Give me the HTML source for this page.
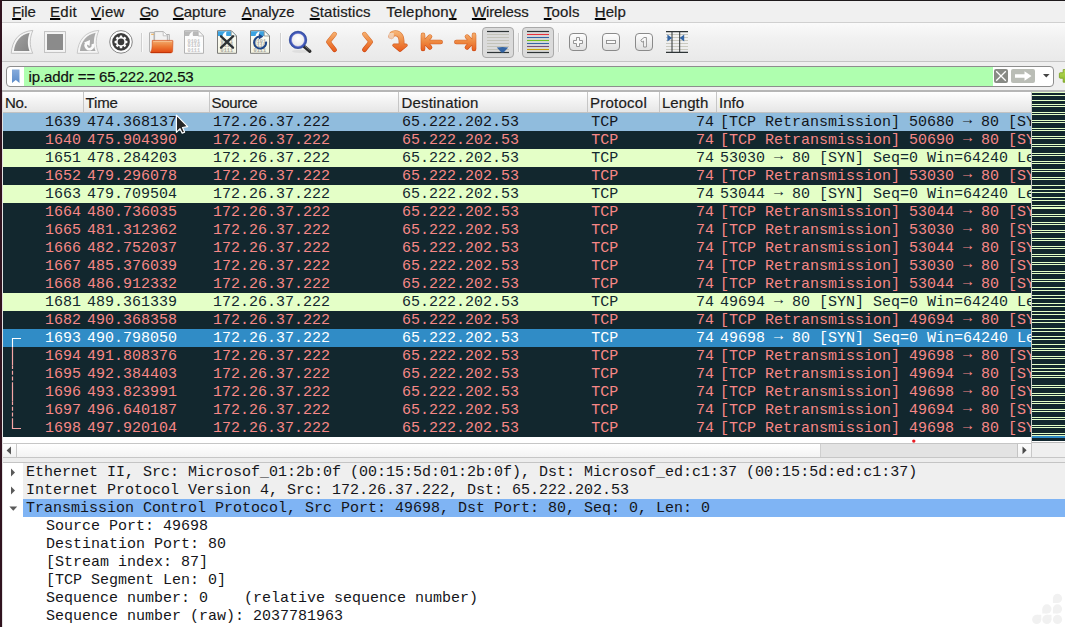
<!DOCTYPE html>
<html><head><meta charset="utf-8">
<style>
html,body{margin:0;padding:0;}
body{width:1065px;height:627px;overflow:hidden;background:#efefef;position:relative;font-family:"Liberation Sans",sans-serif;font-size:15px;color:#1a1a1a;}
div,span,i,svg{position:absolute;box-sizing:border-box;}
#topb{left:0;top:0;width:1065px;height:1px;background:#1e1a1c;}
#leftb{left:0;top:0;width:2px;height:627px;background:#31131f;}
#menubar{left:2px;top:1px;width:1063px;height:21px;background:#f0f0f0;}
#menubar span{-webkit-text-stroke:0.2px #1c1c1c;top:1px;height:20px;line-height:20px;white-space:nowrap;color:#1c1c1c;}
#menubar u{text-decoration:underline;text-underline-offset:1px;text-decoration-thickness:2px;text-decoration-color:#000;text-decoration-skip-ink:none;}
#mline{left:2px;top:22px;width:1063px;height:1px;background:#d0d0d0;}
#toolbar{left:2px;top:23px;width:1063px;height:38px;background:linear-gradient(#fafafa,#f1f1f1 40%,#e9e9e9);}
#tline{left:2px;top:61px;width:1063px;height:1px;background:#c4c4c4;}
.tsep{top:33px;width:1px;height:19px;background:#cfcfcf;border-right:1px solid #fafafa;width:2px;}
.pbtn{top:27px;height:31px;border:1px solid #a9a9a9;border-radius:4px;background:#dbdbdb;}
#filter{left:6px;top:66px;width:1048px;height:21px;border:1px solid #8d8d8d;border-radius:4px;background:#fff;overflow:hidden;}
#fgreen{left:17px;top:0;width:969px;height:19px;background:#afffaf;}
#ftext{-webkit-text-stroke:0.2px #111;left:21.6px;top:0;height:19px;line-height:20px;white-space:nowrap;color:#111;}
#hline{left:2px;top:90px;width:1063px;height:2px;background:#b6b6b6;}
#header{left:2px;top:92px;width:1029px;height:21px;border-bottom:1px solid #c2c2c2;background:linear-gradient(#ffffff,#f4f4f4 40%,#e6e6e6);}
#header span{-webkit-text-stroke:0.2px #1c1c1c;top:0;height:20px;line-height:21px;white-space:nowrap;color:#1c1c1c;}
#header i{top:0;width:1px;height:20px;background:#c6c6c6;}
#list{left:2px;top:0;width:1029px;height:627px;font-family:"Liberation Mono",monospace;font-size:15px;}
.r{left:0;width:1029px;height:18px;overflow:hidden;white-space:pre;}
.r .c{top:1px;height:18px;line-height:18px;}
.r b{font-weight:normal;position:relative;top:-2px;}
.bad{background:#12272e;color:#f78787;}
.grn{background:#e4ffc7;color:#12272e;}
.sel1{background:#90bcdd;color:#12141a;}
.sel2{background:#308cc6;color:#ffffff;}
.no{left:0;width:79px;text-align:right;}
.tm{left:85px;}
.src{left:211px;}
.dst{left:400px;}
.pr{left:589.3px;}
.ln{left:660px;width:52px;text-align:right;}
.inf{left:718px;}
#mmb{left:1031px;top:92px;width:1px;height:366px;background:#c8c8c8;}
#mmw{left:1032px;top:441px;width:33px;height:2px;background:#fff;border-bottom:1px solid #b9b9b9;}
#mml{left:1031px;top:457px;width:34px;height:1px;background:#c6c6c6;}
#mm{left:1032px;top:92px;width:33px;height:349px;background:#12272e;overflow:hidden;}
#mm i{left:0;width:33px;height:1px;background:#e4ffc7;}
#gap{left:2px;top:437px;width:1029px;height:6px;background:#fff;}
#hsb{left:2px;top:443px;width:1029px;height:15px;background:linear-gradient(#ffffff,#f1f1f1);border-top:1px solid #c6c6c6;border-bottom:1px solid #c6c6c6;}
#lb2{left:2px;top:92px;width:1px;height:535px;background:#e3e3e3;}
#split{left:2px;top:458px;width:1063px;height:4px;background:#ededed;}
#detail{left:2px;top:462px;width:1063px;height:165px;border-top:1px solid #c4c4c4;background:#fff;font-family:"Liberation Mono",monospace;font-size:15px;color:#15151a;}
#detail div{left:0;height:18px;line-height:20px;white-space:pre;width:1063px;}
#detail .top{left:21px;width:1042px;background:#efefef;padding-left:3px;}
#detail .sel{background:#7fb4f4;}
#detail .ch{padding-left:44px;}
</style></head><body>
<div id="topb"></div>
<div id="menubar">
<span style="left:10.1px;letter-spacing:-0.17px"><u>F</u>ile</span>
<span style="left:48.0px;letter-spacing:0.29px"><u>E</u>dit</span>
<span style="left:89.1px;letter-spacing:0.36px"><u>V</u>iew</span>
<span style="left:137.8px;letter-spacing:-0.95px"><u>G</u>o</span>
<span style="left:170.9px;letter-spacing:0.02px"><u>C</u>apture</span>
<span style="left:239.7px;letter-spacing:-0.08px"><u>A</u>nalyze</span>
<span style="left:307.7px;letter-spacing:0.10px"><u>S</u>tatistics</span>
<span style="left:384.3px;letter-spacing:0.21px">Telephon<u>y</u></span>
<span style="left:469.9px;letter-spacing:-0.09px"><u>W</u>ireless</span>
<span style="left:541.8px;letter-spacing:0.20px"><u>T</u>ools</span>
<span style="left:592.8px;letter-spacing:0.04px"><u>H</u>elp</span>
</div>
<div id="mline"></div>
<div id="toolbar"></div>
<div id="tline"></div>
<div class="tsep" style="left:141px"></div>
<div class="tsep" style="left:280px"></div>
<div class="tsep" style="left:518px"></div>
<div class="tsep" style="left:558px"></div>
<div class="pbtn" style="left:482px;width:32px"></div>
<div class="pbtn" style="left:522px;width:32px"></div>
<svg style="left:0;top:24px" width="1065" height="38" viewBox="0 24 1065 38">
<defs>
<linearGradient id="gfin" x1="0" y1="0" x2="1" y2="1"><stop offset="0" stop-color="#a2a2a2"/><stop offset="1" stop-color="#858585"/></linearGradient>
<linearGradient id="gor" gradientUnits="userSpaceOnUse" x1="0" y1="31" x2="0" y2="52"><stop offset="0" stop-color="#f7b678"/><stop offset="0.5" stop-color="#ee8a42"/><stop offset="1" stop-color="#e8591a"/></linearGradient>
<linearGradient id="gorb" gradientUnits="userSpaceOnUse" x1="0" y1="31" x2="0" y2="52"><stop offset="0" stop-color="#de8442"/><stop offset="1" stop-color="#c8420e"/></linearGradient>
<linearGradient id="gfold" gradientUnits="userSpaceOnUse" x1="0" y1="40" x2="0" y2="53"><stop offset="0" stop-color="#f3b073"/><stop offset="0.5" stop-color="#ec7a36"/><stop offset="1" stop-color="#e2440f"/></linearGradient>
<linearGradient id="gpap" gradientUnits="userSpaceOnUse" x1="0" y1="30" x2="0" y2="54"><stop offset="0" stop-color="#fefef8"/><stop offset="1" stop-color="#f3f3e2"/></linearGradient>
<linearGradient id="gbtn" gradientUnits="userSpaceOnUse" x1="0" y1="33" x2="0" y2="51"><stop offset="0" stop-color="#ffffff"/><stop offset="1" stop-color="#dedede"/></linearGradient>
<radialGradient id="glens" cx="0.5" cy="0.4" r="0.6"><stop offset="0" stop-color="#ffffff"/><stop offset="1" stop-color="#e4e4e4"/></radialGradient>
</defs>
<!-- shark fin -->
<path id="finO" d="M11.2 53.3 C12.3 40 19 31.5 32.9 30.4 C29.6 37.5 29.2 46 32.7 53.3 Z" fill="#f6f6f6" stroke="#bcbcbc" stroke-width="0.9" stroke-linejoin="round"/>
<path d="M13.9 51 C15 41.5 20.5 34.5 29.7 32.8 C27.4 38.5 27.2 45.5 29.5 51 Z" fill="url(#gfin)"/>
<!-- stop -->
<rect x="44.5" y="31.6" width="21" height="20.8" fill="#f4f4f4" stroke="#bdbdbd" stroke-width="0.9"/>
<rect x="47" y="34" width="16" height="16" fill="#8b8b8b"/>
<!-- restart fin -->
<g transform="translate(66,0)">
<path d="M11.2 53.3 C12.3 40 19 31.5 32.9 30.4 C29.6 37.5 29.2 46 32.7 53.3 Z" fill="#f6f6f6" stroke="#c4c4c4" stroke-width="0.9" stroke-linejoin="round"/>
<path d="M13.9 51 C15 41.5 20.5 34.5 29.7 32.8 C27.4 38.5 27.2 45.5 29.5 51 Z" fill="#ababab"/>
<path d="M26.6 44 A3.6 3.6 0 1 1 20.6 43.2" fill="none" stroke="#fbfbfb" stroke-width="2.6"/>
<path d="M18 42.6 L24 40 L23.6 46 Z" fill="#fbfbfb"/>
</g>
<!-- gear -->
<circle cx="121" cy="41.9" r="11.3" fill="#fdfdfd" stroke="#6a6a6a" stroke-width="0.8"/>
<circle cx="121" cy="41.9" r="8.8" fill="#3b3b3b"/>
<g fill="#fbfbfb" transform="translate(121,41.9)">
<circle r="4.9"/>
<g id="teeth"><rect x="-1.25" y="-6.4" width="2.5" height="12.8" rx="0.4"/><rect x="-1.25" y="-6.4" width="2.5" height="12.8" rx="0.4" transform="rotate(45)"/><rect x="-1.25" y="-6.4" width="2.5" height="12.8" rx="0.4" transform="rotate(90)"/><rect x="-1.25" y="-6.4" width="2.5" height="12.8" rx="0.4" transform="rotate(135)"/></g>
</g>
<circle cx="121" cy="41.9" r="3.3" fill="#3b3b3b"/>
<!-- folder -->
<path d="M149.5 33 Q149.5 32.4 150.2 32.4 H154 V52.5 H151 Q149.5 52.5 149.5 51 Z" fill="#f0f0f0" stroke="#a9a9a9" stroke-width="0.9"/>
<rect x="151.2" y="33.8" width="2.6" height="0.9" fill="#f0a030"/>
<path d="M166 34.5 H169.3 V41 H166 Z" fill="#eeeeee" stroke="#a9a9a9" stroke-width="0.9"/>
<path d="M154.6 31.6 H163.4 L167.4 35.6 V42 H154.6 Z" fill="#f2f2f2" stroke="#ababab" stroke-width="0.9"/>
<path d="M163.2 31.8 V35.8 H167.2" fill="#fdfdfd" stroke="#b5b5b5" stroke-width="0.8"/>
<path d="M152.3 40.4 H172.4 Q173 40.4 172.9 41 L172.6 51.4 Q172.4 52.8 171 52.8 H151 Q150.3 52.8 150.8 52 Q152.2 49.5 152.2 46 Z" fill="url(#gfold)" stroke="#d4531c" stroke-width="0.7"/>
<path d="M150.9 52.5 H171.2" stroke="#c03408" stroke-width="1" fill="none"/>
<path d="M153.2 41.4 H172" stroke="#f8d0a8" stroke-width="0.8" fill="none" opacity="0.8"/>
<!-- save (disabled) file -->
<path d="M184.5 30.7 H198.4 L203.5 35.8 V53.3 H184.5 Z" fill="#fcfcfc" stroke="#b3b3b3" stroke-width="1"/>
<path d="M185 31.2 H198.2 L203 36 H185 Z" fill="#b9b9b9"/>
<path d="M189 36.2 C189.5 33.5 191 31.8 193.3 31.2 C192.5 33 192.6 35 193.2 36.2 Z" fill="#fcfcfc"/>
<path d="M198.2 31.2 V36 H203" fill="#fafafa" stroke="#b3b3b3" stroke-width="0.8"/>
<g font-family="Liberation Mono" font-size="5.2" fill="#c4c4c4" font-weight="bold"><text x="187.6" y="42.6">0101</text><text x="187.6" y="47.1">0110</text><text x="187.6" y="51.6">0111</text></g>
<!-- close file -->
<g id="cfile">
<path d="M217.5 30.7 H231.4 L236.5 35.8 V53.3 H217.5 Z" fill="url(#gpap)" stroke="#7b7b78" stroke-width="1"/>
<path d="M218 31.2 H231.2 L236 36 H218 Z" fill="#3ba3e2"/>
<path d="M222.4 36.2 C222.9 33.5 224.4 31.8 226.7 31.2 C225.9 33 226 35 226.6 36.2 Z" fill="#ffffff"/>
<path d="M231.2 31.2 V36 H236" fill="#fcfcf4" stroke="#8a8a86" stroke-width="0.8"/>
<g font-family="Liberation Mono" font-size="5.2" fill="#a9a99f" font-weight="bold"><text x="220.6" y="42.6">0101</text><text x="220.6" y="47.1">0110</text><text x="220.6" y="51.6">0111</text></g>
</g>
<path d="M221 36.3 L233 47.7 M233 36.3 L221 47.7" stroke="#2b3033" stroke-width="2.3" stroke-linecap="round" fill="none"/>
<!-- reload file -->
<g transform="translate(33,0)">
<path d="M217.5 30.7 H231.4 L236.5 35.8 V53.3 H217.5 Z" fill="url(#gpap)" stroke="#7b7b78" stroke-width="1"/>
<path d="M218 31.2 H231.2 L236 36 H218 Z" fill="#3ba3e2"/>
<path d="M222.4 36.2 C222.9 33.5 224.4 31.8 226.7 31.2 C225.9 33 226 35 226.6 36.2 Z" fill="#ffffff"/>
<path d="M231.2 31.2 V36 H236" fill="#fcfcf4" stroke="#8a8a86" stroke-width="0.8"/>
<g font-family="Liberation Mono" font-size="5.2" fill="#a9a99f" font-weight="bold"><text x="220.6" y="42.6">0101</text><text x="220.6" y="47.1">0110</text><text x="220.6" y="51.6">0111</text></g>
<path d="M233 41.6 A6 6 0 1 1 226.6 36.6" fill="none" stroke="#1f4788" stroke-width="2"/>
<path d="M225.8 33.8 L230.4 36.6 L225.8 39.4 Z" fill="#1f4788"/>
</g>
<!-- magnifier -->
<ellipse cx="300" cy="51.3" rx="8" ry="1.6" fill="#d9d9d9" opacity="0.7"/>
<path d="M303.6 46 L309.8 51.2" stroke="#2a2a2a" stroke-width="3.4" stroke-linecap="round"/>
<path d="M305.2 46.4 L309.6 50" stroke="#8a8a8a" stroke-width="0.8" stroke-linecap="round"/>
<circle cx="298" cy="39.9" r="7.7" fill="url(#glens)" stroke="#3f58b4" stroke-width="2.4"/>
<circle cx="298" cy="39.9" r="8.7" fill="none" stroke="#27408e" stroke-width="0.6"/>
<circle cx="298" cy="39.9" r="6.6" fill="none" stroke="#7a80d8" stroke-width="0.6"/>
<!-- left chevron -->
<path d="M334.6 34.1 L328.4 41.9 L334.6 49.8" fill="none" stroke="url(#gorb)" stroke-width="4.6" stroke-linecap="round" stroke-linejoin="round"/>
<path d="M334.6 34.1 L328.4 41.9 L334.6 49.8" fill="none" stroke="url(#gor)" stroke-width="3.4" stroke-linecap="round" stroke-linejoin="round"/>
<!-- right chevron -->
<path d="M364.4 34.1 L370.7 41.9 L364.4 49.8" fill="none" stroke="url(#gorb)" stroke-width="4.6" stroke-linecap="round" stroke-linejoin="round"/>
<path d="M364.4 34.1 L370.7 41.9 L364.4 49.8" fill="none" stroke="url(#gor)" stroke-width="3.4" stroke-linecap="round" stroke-linejoin="round"/>
<!-- jump -->
<g>
<path d="M391.3 36.2 C392 32.6 398 31.8 400.6 36.5 C401.8 39 401.6 42 401.6 45" fill="none" stroke="url(#gorb)" stroke-width="5.8" stroke-linecap="round"/>
<path d="M394 45.3 H406 L400 50.2 Z" fill="url(#gorb)" stroke="url(#gorb)" stroke-width="3.4" stroke-linejoin="round"/>
<path d="M391.3 36.2 C392 32.6 398 31.8 400.6 36.5 C401.8 39 401.6 42 401.6 45" fill="none" stroke="url(#gor)" stroke-width="4.6" stroke-linecap="round"/>
<path d="M394 45.3 H406 L400 50.2 Z" fill="url(#gor)" stroke="url(#gor)" stroke-width="2.2" stroke-linejoin="round"/>
<path d="M388.8 33 h5 v6.5 h-5z" fill="#f1f1f1" opacity="0.55"/>
</g>
<!-- first -->
<g fill="none" stroke-linecap="round" stroke-linejoin="round">
<path d="M423 34.9 V48.9 M425.5 42 H440.6 M430 36.6 L424.9 42 L430 47.4" stroke="url(#gorb)" stroke-width="4.6"/>
<path d="M423 34.9 V48.9 M425.5 42 H440.6 M430 36.6 L424.9 42 L430 47.4" stroke="url(#gor)" stroke-width="3.4"/>
</g>
<!-- last -->
<g fill="none" stroke-linecap="round" stroke-linejoin="round">
<path d="M474 34.9 V48.9 M471.5 42 H456.4 M467 36.6 L472.1 42 L467 47.4" stroke="url(#gorb)" stroke-width="4.6"/>
<path d="M474 34.9 V48.9 M471.5 42 H456.4 M467 36.6 L472.1 42 L467 47.4" stroke="url(#gor)" stroke-width="3.4"/>
</g>
<!-- autoscroll -->
<g fill="none" stroke-width="1">
<path d="M487 31.5H509" stroke="#2e3436" stroke-width="1.2"/>
<path d="M487 34.5H509M487 37.5H509M487 40.5H509M487 43.5H509M487 46.5H509M487 49.5H509" stroke="#c3c3b9" stroke-width="1"/>
<path d="M487 52.5H509" stroke="#2e3436" stroke-width="1.2"/>
</g>
<path d="M496.8 47.4 Q502.5 46.4 508.2 47.4 L503.6 52.4 H501.4 Z" fill="#3465a4"/>
<!-- colorize -->
<g fill="none" stroke-width="1.1">
<path d="M527 31.5H549" stroke="#2e3436" stroke-width="1.2"/>
<path d="M527 34.5H549" stroke="#e8303a"/>
<path d="M527 37.5H549" stroke="#3465a4"/>
<path d="M527 40.5H549" stroke="#73c020"/>
<path d="M527 43.5H549" stroke="#3465a4"/>
<path d="M527 46.5H549" stroke="#75507b"/>
<path d="M527 49.5H549" stroke="#c8a000"/>
<path d="M527 52.5H549" stroke="#2e3436" stroke-width="1.2"/>
</g>
<!-- zoom buttons -->
<g>
<rect x="569.5" y="33.5" width="17" height="17" rx="3.5" fill="url(#gbtn)" stroke="#8a8a8a" stroke-width="1"/>
<path d="M576.5 37.5h3v3h3v3h-3v3h-3v-3h-3v-3h3z" fill="#fafafa" stroke="#8a8a8a" stroke-width="0.9"/>
<rect x="602.5" y="33.5" width="17" height="17" rx="3.5" fill="url(#gbtn)" stroke="#8a8a8a" stroke-width="1"/>
<rect x="606.5" y="40.5" width="9" height="3" fill="#fafafa" stroke="#8a8a8a" stroke-width="0.9"/>
<rect x="635.5" y="33.5" width="17" height="17" rx="3.5" fill="url(#gbtn)" stroke="#8a8a8a" stroke-width="1"/>
<path d="M640.8 40.2 L644 37.5 H646.4 V47 H643.6 V41 L642 42.2 Z" fill="#fafafa" stroke="#8a8a8a" stroke-width="0.9"/>
</g>
<!-- resize columns -->
<g fill="none">
<path d="M666 34.5H688M666 37.5H688M666 40.5H688M666 43.5H688M666 46.5H688M666 49.5H688" stroke="#c9c9bf" stroke-width="1"/>
<path d="M666 31.6H688M666 52.4H688" stroke="#2e3436" stroke-width="1.2"/>
<path d="M672 31V53M679.7 31V53" stroke="#2e3436" stroke-width="1"/>
</g>
<path d="M667.4 34.6 L672 38 L667.4 41.4 Z" fill="#3465a4"/>
<path d="M684.2 34.6 L679.6 38 L684.2 41.4 Z" fill="#3465a4"/>
</svg>

<div id="filter"><div id="fgreen"></div><span id="ftext" style="letter-spacing:-0.11px">ip.addr == 65.222.202.53</span>
<svg style="left:4px;top:2px" width="10" height="15" viewBox="0 0 10 15"><defs><linearGradient id="bk" x1="0" y1="0" x2="0" y2="1"><stop offset="0" stop-color="#86abdc"/><stop offset="1" stop-color="#5b8bc9"/></linearGradient></defs><path d="M1 0.5H8.5V14L4.8 11L1 14Z" fill="url(#bk)"/></svg>
<div style="left:987px;top:2px;width:14px;height:14px;background:#888a85;border-radius:2px"></div>
<svg style="left:987px;top:2px" width="14" height="14" viewBox="0 0 14 14"><path d="M2.2 2.2L11.8 11.8M11.8 2.2L2.2 11.8" stroke="#fff" stroke-width="1.3" fill="none"/></svg>
<div style="left:1004px;top:2px;width:24px;height:14px;background:#babdb6;border-radius:2px"></div>
<svg style="left:1004px;top:2px" width="24" height="14" viewBox="0 0 24 14"><path d="M4 5.2H13.5V2.2L20.5 7L13.5 11.8V8.8H4Z" fill="#fff"/></svg>
<svg style="left:1035.8px;top:7.2px" width="7" height="4" viewBox="0 0 7 4"><path d="M0 0H6.6L3.3 3.6Z" fill="#444"/></svg>
</div>
<svg style="left:1057px;top:67px" width="8" height="18" viewBox="1057 67 8 18"><defs><linearGradient id="gpl" x1="0" y1="0" x2="0" y2="1"><stop offset="0" stop-color="#b8dc58"/><stop offset="1" stop-color="#8ab82a"/></linearGradient></defs><path d="M1063.2 69.6 H1066 V82.2 H1063.2 V78.2 H1060.2 Q1059.4 78.2 1059.4 77.4 V73.6 Q1059.4 72.8 1060.2 72.8 H1063.2 Z" fill="url(#gpl)" stroke="#7fa428" stroke-width="0.9"/></svg>
<div id="hline"></div>
<div id="header">
<span style="left:3.0px;letter-spacing:-0.35px">No.</span>
<i style="left:81px"></i>
<span style="left:83.6px;letter-spacing:-0.14px">Time</span>
<i style="left:207px"></i>
<span style="left:209.4px;letter-spacing:-0.27px">Source</span>
<i style="left:396px"></i>
<span style="left:399.5px;letter-spacing:0.19px">Destination</span>
<i style="left:585px"></i>
<span style="left:587.9px;letter-spacing:0.26px">Protocol</span>
<i style="left:657px"></i>
<span style="left:659.9px;letter-spacing:0.09px">Length</span>
<i style="left:714px"></i>
<span style="left:717.0px;letter-spacing:-0.00px">Info</span>
</div>
<div id="list">
<div class="r sel1" style="top:113px"><span class="c no">1639</span><span class="c tm">474.368137</span><span class="c src">172.26.37.222</span><span class="c dst">65.222.202.53</span><span class="c pr">TCP</span><span class="c ln">74</span><span class="c inf">[TCP Retransmission] 50680 <b>→</b> 80 [SYN] Seq=0 Win=64240 Len=0</span></div>
<div class="r bad" style="top:131px"><span class="c no">1640</span><span class="c tm">475.904390</span><span class="c src">172.26.37.222</span><span class="c dst">65.222.202.53</span><span class="c pr">TCP</span><span class="c ln">74</span><span class="c inf">[TCP Retransmission] 50690 <b>→</b> 80 [SYN] Seq=0 Win=64240 Len=0</span></div>
<div class="r grn" style="top:149px"><span class="c no">1651</span><span class="c tm">478.284203</span><span class="c src">172.26.37.222</span><span class="c dst">65.222.202.53</span><span class="c pr">TCP</span><span class="c ln">74</span><span class="c inf">53030 <b>→</b> 80 [SYN] Seq=0 Win=64240 Len=0 MSS=1460</span></div>
<div class="r bad" style="top:167px"><span class="c no">1652</span><span class="c tm">479.296078</span><span class="c src">172.26.37.222</span><span class="c dst">65.222.202.53</span><span class="c pr">TCP</span><span class="c ln">74</span><span class="c inf">[TCP Retransmission] 53030 <b>→</b> 80 [SYN] Seq=0 Win=64240 Len=0</span></div>
<div class="r grn" style="top:185px"><span class="c no">1663</span><span class="c tm">479.709504</span><span class="c src">172.26.37.222</span><span class="c dst">65.222.202.53</span><span class="c pr">TCP</span><span class="c ln">74</span><span class="c inf">53044 <b>→</b> 80 [SYN] Seq=0 Win=64240 Len=0 MSS=1460</span></div>
<div class="r bad" style="top:203px"><span class="c no">1664</span><span class="c tm">480.736035</span><span class="c src">172.26.37.222</span><span class="c dst">65.222.202.53</span><span class="c pr">TCP</span><span class="c ln">74</span><span class="c inf">[TCP Retransmission] 53044 <b>→</b> 80 [SYN] Seq=0 Win=64240 Len=0</span></div>
<div class="r bad" style="top:221px"><span class="c no">1665</span><span class="c tm">481.312362</span><span class="c src">172.26.37.222</span><span class="c dst">65.222.202.53</span><span class="c pr">TCP</span><span class="c ln">74</span><span class="c inf">[TCP Retransmission] 53030 <b>→</b> 80 [SYN] Seq=0 Win=64240 Len=0</span></div>
<div class="r bad" style="top:239px"><span class="c no">1666</span><span class="c tm">482.752037</span><span class="c src">172.26.37.222</span><span class="c dst">65.222.202.53</span><span class="c pr">TCP</span><span class="c ln">74</span><span class="c inf">[TCP Retransmission] 53044 <b>→</b> 80 [SYN] Seq=0 Win=64240 Len=0</span></div>
<div class="r bad" style="top:257px"><span class="c no">1667</span><span class="c tm">485.376039</span><span class="c src">172.26.37.222</span><span class="c dst">65.222.202.53</span><span class="c pr">TCP</span><span class="c ln">74</span><span class="c inf">[TCP Retransmission] 53030 <b>→</b> 80 [SYN] Seq=0 Win=64240 Len=0</span></div>
<div class="r bad" style="top:275px"><span class="c no">1668</span><span class="c tm">486.912332</span><span class="c src">172.26.37.222</span><span class="c dst">65.222.202.53</span><span class="c pr">TCP</span><span class="c ln">74</span><span class="c inf">[TCP Retransmission] 53044 <b>→</b> 80 [SYN] Seq=0 Win=64240 Len=0</span></div>
<div class="r grn" style="top:293px"><span class="c no">1681</span><span class="c tm">489.361339</span><span class="c src">172.26.37.222</span><span class="c dst">65.222.202.53</span><span class="c pr">TCP</span><span class="c ln">74</span><span class="c inf">49694 <b>→</b> 80 [SYN] Seq=0 Win=64240 Len=0 MSS=1460</span></div>
<div class="r bad" style="top:311px"><span class="c no">1682</span><span class="c tm">490.368358</span><span class="c src">172.26.37.222</span><span class="c dst">65.222.202.53</span><span class="c pr">TCP</span><span class="c ln">74</span><span class="c inf">[TCP Retransmission] 49694 <b>→</b> 80 [SYN] Seq=0 Win=64240 Len=0</span></div>
<div class="r sel2" style="top:329px"><span class="c no">1693</span><span class="c tm">490.798050</span><span class="c src">172.26.37.222</span><span class="c dst">65.222.202.53</span><span class="c pr">TCP</span><span class="c ln">74</span><span class="c inf">49698 <b>→</b> 80 [SYN] Seq=0 Win=64240 Len=0 MSS=1460</span></div>
<div class="r bad" style="top:347px"><span class="c no">1694</span><span class="c tm">491.808376</span><span class="c src">172.26.37.222</span><span class="c dst">65.222.202.53</span><span class="c pr">TCP</span><span class="c ln">74</span><span class="c inf">[TCP Retransmission] 49698 <b>→</b> 80 [SYN] Seq=0 Win=64240 Len=0</span></div>
<div class="r bad" style="top:365px"><span class="c no">1695</span><span class="c tm">492.384403</span><span class="c src">172.26.37.222</span><span class="c dst">65.222.202.53</span><span class="c pr">TCP</span><span class="c ln">74</span><span class="c inf">[TCP Retransmission] 49694 <b>→</b> 80 [SYN] Seq=0 Win=64240 Len=0</span></div>
<div class="r bad" style="top:383px"><span class="c no">1696</span><span class="c tm">493.823991</span><span class="c src">172.26.37.222</span><span class="c dst">65.222.202.53</span><span class="c pr">TCP</span><span class="c ln">74</span><span class="c inf">[TCP Retransmission] 49698 <b>→</b> 80 [SYN] Seq=0 Win=64240 Len=0</span></div>
<div class="r bad" style="top:401px"><span class="c no">1697</span><span class="c tm">496.640187</span><span class="c src">172.26.37.222</span><span class="c dst">65.222.202.53</span><span class="c pr">TCP</span><span class="c ln">74</span><span class="c inf">[TCP Retransmission] 49694 <b>→</b> 80 [SYN] Seq=0 Win=64240 Len=0</span></div>
<div class="r bad" style="top:419px"><span class="c no">1698</span><span class="c tm">497.920104</span><span class="c src">172.26.37.222</span><span class="c dst">65.222.202.53</span><span class="c pr">TCP</span><span class="c ln">74</span><span class="c inf">[TCP Retransmission] 49698 <b>→</b> 80 [SYN] Seq=0 Win=64240 Len=0</span></div>
</div>
<div id="gap"></div>
<div id="hsb"><div style="left:14px;top:0;width:1px;height:13px;background:#c9c9c9"></div><div style="left:15px;top:0;width:803px;height:13px;background:linear-gradient(#ffffff,#f3f3f3)"></div><div style="left:818px;top:0;width:197px;height:13px;background:#e3e3e3;border-left:1px solid #cfcfcf"></div><div style="left:1015px;top:0;width:1px;height:13px;background:#c4c4c4"></div><div style="left:1016px;top:0;width:13px;height:13px;background:linear-gradient(#fdfdfd,#f1f1f1)"></div>
<svg style="left:4px;top:2px" width="6" height="9" viewBox="0 0 6 9"><path d="M5 0.6V8.4L0.6 4.5Z" fill="#555"/></svg>
<svg style="left:1019.6px;top:2px" width="6" height="9" viewBox="0 0 6 9"><path d="M0.5 0.4V8.2L4.6 4.3Z" fill="#4a4a4a"/></svg></div>
<div id="mmb"></div><div id="mmw"></div><div id="mml"></div>
<div id="mm"><i style="top:0px"></i><i style="top:3px"></i><i style="top:8px"></i><i style="top:12px"></i><i style="top:14px"></i><i style="top:20px"></i><i style="top:22px"></i><i style="top:28px"></i><i style="top:30px"></i><i style="top:36px"></i><i style="top:38px"></i><i style="top:44px"></i><i style="top:46px"></i><i style="top:52px"></i><i style="top:54px"></i><i style="top:61px"></i><i style="top:63px"></i><i style="top:69px"></i><i style="top:71px"></i><i style="top:77px"></i><i style="top:79px"></i><i style="top:85px"></i><i style="top:87px"></i><i style="top:93px"></i><i style="top:97px"></i><i style="top:100px"></i><i style="top:105px"></i><i style="top:108px"></i><i style="top:113px"></i><i style="top:115px"></i><i style="top:116px"></i><i style="top:122px"></i><i style="top:124px"></i><i style="top:130px"></i><i style="top:132px"></i><i style="top:138px"></i><i style="top:140px"></i><i style="top:146px"></i><i style="top:148px"></i><i style="top:154px"></i><i style="top:156px"></i><i style="top:162px"></i><i style="top:164px"></i><i style="top:170px"></i><i style="top:172px"></i><i style="top:179px"></i><i style="top:181px"></i><i style="top:187px"></i><i style="top:189px"></i><i style="top:195px"></i><i style="top:198px"></i><i style="top:203px"></i><i style="top:206px"></i><i style="top:211px"></i><i style="top:214px"></i><i style="top:219px"></i><i style="top:222px"></i><i style="top:227px"></i><i style="top:230px"></i><i style="top:236px"></i><i style="top:239px"></i><i style="top:244px"></i><i style="top:247px"></i><i style="top:252px"></i><i style="top:256px"></i><i style="top:258px"></i><i style="top:264px"></i><i style="top:266px"></i><i style="top:272px"></i><i style="top:276px"></i><i style="top:279px"></i><i style="top:283px"></i><i style="top:285px"></i><i style="top:293px"></i><i style="top:295px"></i><i style="top:301px"></i><i style="top:303px"></i><i style="top:309px"></i><i style="top:311px"></i><i style="top:317px"></i><i style="top:319px"></i><i style="top:325px"></i><i style="top:327px"></i><i style="top:333px"></i><i style="top:335px"></i><i style="top:341px"></i><i style="top:343px"></i><i style="top:344px;height:2px;background:#308cc6"></i></div>
<div id="split"></div>
<div id="detail">
<svg style="left:8px;top:4.5px" width="6" height="9" viewBox="0 0 6 9"><path d="M1 0.6V8.4L5 4.5Z" fill="#5a5a5a"/></svg>
<svg style="left:8px;top:22.5px" width="6" height="9" viewBox="0 0 6 9"><path d="M1 0.6V8.4L5 4.5Z" fill="#5a5a5a"/></svg>
<svg style="left:7px;top:42.5px" width="9" height="6" viewBox="0 0 9 6"><path d="M0.4 0.6H8.2L4.3 4.8Z" fill="#5a5a5a"/></svg>
<div class="top" style="top:0">Ethernet II, Src: Microsof_01:2b:0f (00:15:5d:01:2b:0f), Dst: Microsof_ed:c1:37 (00:15:5d:ed:c1:37)</div>
<div class="top" style="top:18px">Internet Protocol Version 4, Src: 172.26.37.222, Dst: 65.222.202.53</div>
<div class="top sel" style="top:36px">Transmission Control Protocol, Src Port: 49698, Dst Port: 80, Seq: 0, Len: 0</div>
<div class="ch" style="top:54px">Source Port: 49698</div>
<div class="ch" style="top:72px">Destination Port: 80</div>
<div class="ch" style="top:90px">[Stream index: 87]</div>
<div class="ch" style="top:108px">[TCP Segment Len: 0]</div>
<div class="ch" style="top:126px">Sequence number: 0    (relative sequence number)</div>
<div class="ch" style="top:144px">Sequence number (raw): 2037781963</div>
</div>

<div id="lb2"></div>
<svg style="left:0;top:329px" width="40" height="110" viewBox="0 329 40 110">
<path d="M12.5 347V338.5H21" fill="none" stroke="#ffffff" stroke-width="1.1"/>
<path d="M12.5 347V365.4" fill="none" stroke="#f5a6a6" stroke-width="1.2"/>
<path d="M12.5 365.4V383" fill="none" stroke="#f5a6a6" stroke-width="1.2" stroke-dasharray="4 1.8" stroke-dashoffset="0.5"/>
<path d="M12.5 383V401.4" fill="none" stroke="#f5a6a6" stroke-width="1.2"/>
<path d="M12.5 401.4V419" fill="none" stroke="#f5a6a6" stroke-width="1.2" stroke-dasharray="4 1.8" stroke-dashoffset="0.5"/>
<path d="M12.5 419V428.5H21" fill="none" stroke="#f5a6a6" stroke-width="1.2"/>
</svg>
<svg style="left:170px;top:110px" width="24" height="28" viewBox="170 110 24 28">
<path d="M176.4 115.2 V132.3 L180 128.7 L182.2 133.2 L184.6 132.1 L182.5 127.5 L187.7 126.6 Z" fill="#272727" stroke="#ffffff" stroke-width="1.2" stroke-linejoin="round"/>
</svg>
<svg style="left:910px;top:438px" width="8" height="6" viewBox="0 0 8 6"><circle cx="3.8" cy="3.1" r="1.7" fill="#e81c24"/></svg>
<svg style="left:1025px;top:590px" width="40" height="37" viewBox="1025 590 40 37">
<g fill="#f1f1f1">
<circle cx="1057.5" cy="598.4" r="4.6"/><circle cx="1046.9" cy="608.9" r="4.6"/><circle cx="1057.5" cy="608.9" r="4.6"/>
<circle cx="1036.7" cy="619.4" r="4.6"/><circle cx="1046.9" cy="619.4" r="4.6"/><circle cx="1057.5" cy="619.4" r="4.6"/>
<rect x="1052.9" y="598.4" width="4.6" height="4.6"/><rect x="1042.3" y="608.9" width="4.6" height="4.6"/><rect x="1052.9" y="608.9" width="4.6" height="4.6"/>
<rect x="1036.7" y="614.8" width="4.6" height="4.6"/><rect x="1046.9" y="614.8" width="4.6" height="4.6"/>
</g>
</svg>
<div id="leftb"></div>
</body></html>
